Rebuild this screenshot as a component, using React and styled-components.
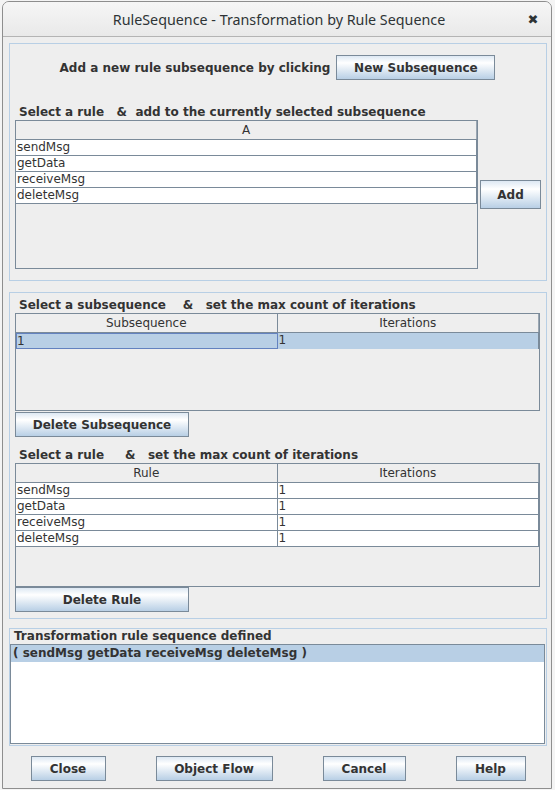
import styled, { createGlobalStyle } from "styled-components";

const GlobalStyle = createGlobalStyle`
  html, body {
    margin: 0;
    padding: 0;
    background: #f4f4f4;
  }
  body {
    width: 555px;
    height: 790px;
    overflow: hidden;
    font-family: "DejaVu Sans", "Liberation Sans", sans-serif;
    color: #333333;
  }
`;

const rules = ["sendMsg", "getData", "receiveMsg", "deleteMsg"];

const App = () => {
    return (
        <>
            <GlobalStyle />
            <Window>
                <TitleBar>
                    <span />
                    <Title>RuleSequence - Transformation by Rule Sequence</Title>
                    <CloseX>✖</CloseX>
                </TitleBar>
                <Content>
                    <Panel $h={238} $pad="11px 6px 0 5px">
                        <TopRow>
                            <Label $indent={0}>Add a new rule subsequence by clicking</Label>
                            <Button $w={159}>New Subsequence</Button>
                        </TopRow>
                        <Label $indent={4} $top={24}>Select a rule   &amp;  add to the currently selected subsequence</Label>
                        <TableRow>
                            <TableBox $w={463} $h={149}>
                                <HeadRow $cols={1}>
                                    <HeadCell>A</HeadCell>
                                </HeadRow>
                                {rules.map((r) => (
                                    <Row key={r} $cols={1}>
                                        <Cell>{r}</Cell>
                                    </Row>
                                ))}
                            </TableBox>
                            <Button $w={61} $h={29}>Add</Button>
                        </TableRow>
                    </Panel>

                    <Panel $h={327} $gap={11} $pad="4px 6px 0 5px">
                        <Label $indent={4}>Select a subsequence    &amp;   set the max count of iterations</Label>
                        <TableBox $h={98}>
                            <HeadRow $cols={2}>
                                <HeadCell>Subsequence</HeadCell>
                                <HeadCell>Iterations</HeadCell>
                            </HeadRow>
                            <Row $cols={2} $selected>
                                <Cell $focus>1</Cell>
                                <Cell>1</Cell>
                            </Row>
                        </TableBox>
                        <Button $w={174} $top={1}>Delete Subsequence</Button>
                        <Label $indent={4} $top={10}>Select a rule     &amp;   set the max count of iterations</Label>
                        <TableBox $h={124}>
                            <HeadRow $cols={2}>
                                <HeadCell>Rule</HeadCell>
                                <HeadCell>Iterations</HeadCell>
                            </HeadRow>
                            {rules.map((r) => (
                                <Row key={r} $cols={2}>
                                    <Cell>{r}</Cell>
                                    <Cell>1</Cell>
                                </Row>
                            ))}
                        </TableBox>
                        <Button $w={174}>Delete Rule</Button>
                    </Panel>

                    <Panel $h={118} $gap={9} $pad="0 1px 1px 0">
                        <Label $indent={4} $lh={15}>Transformation rule sequence defined</Label>
                        <ListBox>
                            <ListItem $selected>( sendMsg getData receiveMsg deleteMsg )</ListItem>
                        </ListBox>
                    </Panel>

                    <ButtonBar>
                        <Button $w={75}>Close</Button>
                        <Button $w={117}>Object Flow</Button>
                        <Button $w={83}>Cancel</Button>
                        <Button $w={70}>Help</Button>
                    </ButtonBar>
                </Content>
            </Window>
        </>
    );
};

export default App;

const Window = styled.div`
    box-sizing: border-box;
    margin: 1px 0 0 2px;
    width: 550px;
    height: 788px;
    border: 1px solid #8e8e8e;
    border-radius: 7px 7px 0 0;
    background: #eeeeee;
    display: flex;
    flex-direction: column;
    overflow: hidden;
`;

const TitleBar = styled.div`
    height: 34px;
    flex: none;
    display: grid;
    grid-template-columns: 36px 1fr 36px;
    align-items: center;
    background: linear-gradient(#f6f6f6, #e9e9e9);
    border-bottom: 1px solid #b4b4b4;
`;

const Title = styled.div`
    text-align: center;
    font-family: "Noto Sans", "DejaVu Sans", sans-serif;
    font-size: 14.3px;
    color: #2e3436;
    padding-left: 4px;
`;

const CloseX = styled.div`
    font-family: "DejaVu Sans", sans-serif;
    font-size: 13px;
    color: #2e3436;
    text-align: center;
`;

const Content = styled.div`
    flex: 1;
    display: flex;
    flex-direction: column;
    padding: 6px 4px 7px 6px;
`;

const Panel = styled.div`
    box-sizing: border-box;
    height: ${(p) => p.$h}px;
    flex: none;
    margin-top: ${(p) => p.$gap || 0}px;
    border: 1px solid #b8cfe5;
    padding: ${(p) => p.$pad};
    display: flex;
    flex-direction: column;
`;

const TopRow = styled.div`
    display: flex;
    justify-content: center;
    align-items: center;
    gap: 6px;
    height: 25px;
`;

const Label = styled.div`
    font-size: 12px;
    font-weight: bold;
    line-height: ${(p) => p.$lh || 16}px;
    white-space: pre;
    color: #333333;
    padding-left: ${(p) => p.$indent}px;
    margin-top: ${(p) => p.$top || 0}px;
`;

const Button = styled.button`
    box-sizing: border-box;
    flex: none;
    width: ${(p) => p.$w}px;
    height: ${(p) => p.$h || 25}px;
    margin-top: ${(p) => p.$top || 0}px;
    padding: 0;
    border: 1px solid #7a8a99;
    border-radius: 0;
    background: linear-gradient(#dde8f3, #ffffff 30%, #b8cfe5);
    font-family: "DejaVu Sans", sans-serif;
    font-size: 12px;
    font-weight: bold;
    color: #333333;
`;

const TableRow = styled.div`
    display: flex;
    align-items: center;
    gap: 2px;
`;

const TableBox = styled.div`
    box-sizing: border-box;
    width: ${(p) => (p.$w ? `${p.$w}px` : "100%")};
    height: ${(p) => p.$h}px;
    border: 1px solid #7a8a99;
    background: #eeeeee;
    flex: none;
`;

const HeadRow = styled.div`
    display: grid;
    grid-template-columns: repeat(${(p) => p.$cols}, 1fr);
    height: 19px;
    box-sizing: border-box;
    border-bottom: 1px solid #7a8a99;
`;

const HeadCell = styled.div`
    font-size: 12px;
    line-height: 18px;
    text-align: center;
    color: #333333;
    border-right: 1px solid #7a8a99;
    &:last-child {
        border-right-color: #9aa6b2;
    }
`;

const Row = styled.div`
    display: grid;
    grid-template-columns: repeat(${(p) => p.$cols}, 1fr);
    height: 16px;
    box-sizing: border-box;
    border-bottom: 1px solid ${(p) => (p.$selected ? "#b8cfe5" : "#7a8a99")};
    background: ${(p) => (p.$selected ? "#b8cfe5" : "#ffffff")};
`;

const Cell = styled.div`
    box-sizing: border-box;
    font-size: 12px;
    line-height: 14px;
    padding-left: 1px;
    color: #333333;
    border-right: 1px solid #7a8a99;
    ${(p) => p.$focus && `
        border: 1px solid #6382bf;
        padding-left: 0;
    `}
`;

const ListBox = styled.div`
    flex: 1;
    border: 1px solid #7a8a99;
    background: #ffffff;
`;

const ListItem = styled.div`
    height: 17px;
    line-height: 17px;
    padding-left: 2px;
    font-size: 12px;
    font-weight: bold;
    color: #333333;
    background: ${(p) => (p.$selected ? "#b8cfe5" : "transparent")};
`;

const ButtonBar = styled.div`
    display: flex;
    justify-content: center;
    gap: 50px;
    margin-top: 10px;
`;
